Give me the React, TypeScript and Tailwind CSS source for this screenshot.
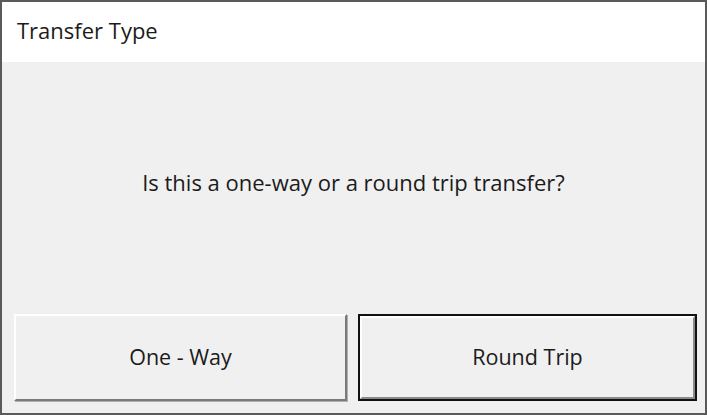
export default function App() {
  const font = { fontFamily: '"Open Sans", "Noto Sans", Arial, sans-serif' };
  return (
    <div className="w-[707px] h-[415px] border-2 border-[#5a5a5a] bg-[#f0f0f0] flex flex-col text-[#1b1b1b]" style={font}>
      <div className="h-[60px] bg-white flex items-center pl-[15px] pb-[3px] text-[22px] shrink-0">
        Transfer Type
      </div>
      <div className="flex-1 flex flex-col">
        <div className="h-[252px] flex items-center justify-center text-[22px] pb-[12px]">
          Is this a one-way or a round trip transfer?
        </div>
        <div className="flex pl-[12px] pr-[7px] gap-[11px]">
          <button className="w-[333px] h-[87px] bg-[#f0f0f0] border-t-2 border-l-2 border-t-white border-l-white border-r-2 border-b-2 border-r-[#7a7a7a] border-b-[#7a7a7a] shadow-[1px_1px_0_#b0b0b0] text-[21.5px]">
            One - Way
          </button>
          <button className="w-[339px] h-[87px] border-2 border-[#111] bg-[#f0f0f0] p-0">
            <div className="w-full h-full flex items-center justify-center border-t-2 border-l-2 border-t-white border-l-white border-r-2 border-b-2 border-r-[#8a8a8a] border-b-[#8a8a8a] text-[21.5px]">
              Round Trip
            </div>
          </button>
        </div>
      </div>
    </div>
  );
}
